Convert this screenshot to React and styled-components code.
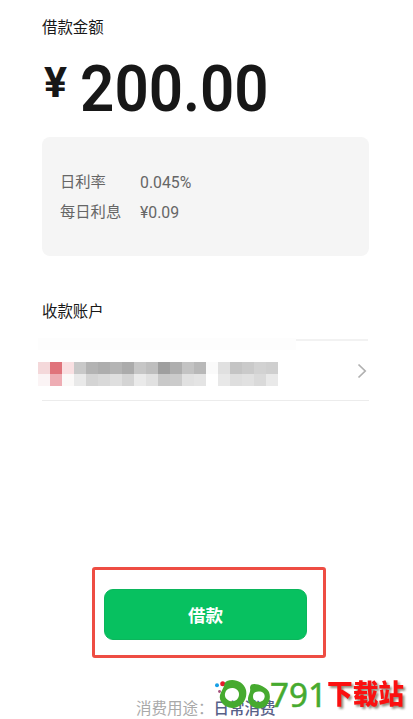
import React from 'react';
import styled, { createGlobalStyle } from 'styled-components';

const GlobalStyle = createGlobalStyle`
  * { box-sizing: border-box; }
  body { margin: 0; background: #fff; overflow: hidden; }
`;

const Page = styled.main`
  position: relative;
  display: flex;
  flex-direction: column;
  width: 413px;
  height: 719px;
  overflow: hidden;
  background: #fff;
  font-family: Roboto, 'Noto Sans CJK SC', sans-serif;

  > * { flex-shrink: 0; }
`;

const SectionTitle = styled.h2`
  margin: ${(p) => p.$top}px 0 0 42px;
  height: 24px;
  font-size: 15.4px;
  line-height: 25px;
  font-weight: 400;
  color: #181818;
`;

const Amount = styled.div`
  display: flex;
  margin: 14px 0 0 44px;
  height: 72px;
  color: #171717;
`;

const Currency = styled.span`
  width: 36px;
  font-size: 43px;
  line-height: 50px;
  font-weight: 700;
  margin-top: 3px;
`;

const Figure = styled.span`
  font-size: 64px;
  line-height: 72px;
  font-weight: 600;
  white-space: nowrap;
  transform: scaleX(0.938);
  transform-origin: 2px 50%;
`;

const RateCard = styled.dl`
  display: grid;
  grid-template-columns: 80px 1fr;
  grid-auto-rows: 30px;
  margin: 11px 0 0 42px;
  padding: 30px 18px;
  width: 327px;
  height: 119px;
  border-radius: 8px;
  background: #f5f5f5;
  font-size: 15.3px;
  color: #666;
`;

const Term = styled.dt`
  margin: 0;
  line-height: 31px;
`;

const Value = styled.dd`
  margin: 0;
  font-size: 15.8px;
  line-height: 31px;
`;

const AccountRow = styled.div`
  display: flex;
  align-items: center;
  justify-content: space-between;
  margin: 14px 0 0 38px;
  padding-right: 1px;
  width: 331px;
  height: 63px;
  background:
    linear-gradient(#f2f2f2, #f2f2f2) 258px 1px / 72px 2px no-repeat,
    linear-gradient(#fdfdfd, #fdfdfd) 0 0 / 258px 12px no-repeat,
    linear-gradient(#ececec, #ececec) 4px 62px / 327px 1px no-repeat;
`;

const Mosaic = styled.div`
  display: grid;
  grid-template-columns: repeat(20, 12px);
  grid-auto-rows: 12px;
  margin-top: 9px;
`;

const Cell = styled.span`
  background: ${(p) => p.$tone};
`;

const Chevron = styled.svg`
  margin-top: 3px;
  width: 11px;
  height: 16px;
`;

const Highlight = styled.div`
  display: flex;
  align-items: flex-start;
  margin: 166px 0 0 92px;
  padding: 19px 0 0 9px;
  width: 234px;
  height: 91px;
  border: 3px solid #ee4d43;
  border-radius: 3px;
`;

const BorrowButton = styled.button`
  width: 203px;
  height: 51px;
  padding: 0;
  border: 1px solid #0bb65c;
  border-radius: 9px;
  background: #07c160;
  color: #fff;
  font: 700 17.5px/49px 'Noto Sans CJK SC', sans-serif;
`;

const Purpose = styled.p`
  display: flex;
  margin: 39px 0 0 136px;
  font-size: 15.5px;
  line-height: 24px;
  color: #a9a9a9;
`;

const PurposeValue = styled.b`
  font-weight: 500;
  color: #576088;
`;

const Watermark = styled.svg`
  position: absolute;
  left: 205px;
  top: 670px;
  width: 208px;
  height: 49px;
`;

const SiteName = styled.text`
  font: 900 27px 'Noto Sans CJK SC', sans-serif;
  fill: #fb1010;
  filter: drop-shadow(2px 2.5px 1.2px rgba(100, 95, 75, 0.7));
`;

const TOP = ['#f4d8da', '#e0737b', '#f9e0e2', '#c8c8c8', '#b3b3b3', '#adadad', '#b4b4b4', '#ababab', '#c6c6c6', '#bebebe', '#9f9f9f', '#aeaeae', '#c3c3c3', '#b8b8b8', '#fafafa', '#e0e0e0', '#c4c4c4', '#cacaca', '#d2d2d2', '#cfcfcf'];
const BOTTOM = ['#fbf4f5', '#eeadb4', '#fbf9f8', '#e9e9e9', '#d4d4d4', '#d9d9d9', '#dfdfdf', '#d4d4d4', '#eaeaea', '#e1e1e1', '#c9c9c9', '#cbcbcb', '#e1e1e1', '#e4e4e4', '#ffffff', '#e8e8e8', '#dedede', '#e1e1e1', '#dadada', '#e9e9e9'];

function SiteLogo() {
  return (
    <Watermark viewBox="0 0 208 49">
      <circle cx="12" cy="15.3" r="2" fill="#169fe6" />
      <circle cx="17.7" cy="13.8" r="2.5" fill="#e51c2c" />
      <circle cx="14.5" cy="21.5" r="1.4" fill="#a5527c" />
      <g fill="#46aa2f" fillRule="evenodd">
        <path d="M22 11C28 8 39 11 41 20C43 30 36 38 27 38C19 37.500 13.500 31 15 25C16 21 19 18 19.500 14C20 12 21 11.500 22 11ZM28 18C22 17.500 19.500 22 20 26C21 31 28 33 32 29.500C36 25 34 18.500 28 18Z" />
        <path d="M46.500 14.500C50 12.500 61 16 64 22C67 30 62 38 55 38.500C48 39 42.500 34 43 28C43.500 24 46 22 45 18C45 16.500 45.500 15.500 46.500 14.500ZM54 21.500C49 21 47 25 48.500 29C50.500 33 57 33 59 29C61 25 58.500 21.500 54 21.500Z" />
      </g>
      <text x="65" y="36.500" fill="#46aa2f" stroke="#46aa2f" strokeWidth=".5" fontFamily="Noto Sans, sans-serif" fontSize="33" fontWeight="400" textLength="57" lengthAdjust="spacingAndGlyphs">791</text>
      <SiteName x="122" y="34" textLength="77" lengthAdjust="spacingAndGlyphs">下载站</SiteName>
    </Watermark>
  );
}

export default function App() {
  return (
    <>
      <GlobalStyle />
      <Page>
        <SectionTitle $top={16}>借款金额</SectionTitle>
        <Amount>
          <Currency>¥</Currency>
          <Figure>200.00</Figure>
        </Amount>
        <RateCard>
          <Term>日利率</Term>
          <Value>0.045%</Value>
          <Term>每日利息</Term>
          <Value>¥0.09</Value>
        </RateCard>
        <SectionTitle $top={44}>收款账户</SectionTitle>
        <AccountRow>
          <Mosaic>
            {[...TOP, ...BOTTOM].map((tone, i) => (
              <Cell key={i} $tone={tone} />
            ))}
          </Mosaic>
          <Chevron viewBox="0 0 11 16" fill="none" stroke="#b0b0b0" strokeWidth="1.7">
            <path d="M1.500 1.500L8.200 8L1.500 14.500" />
          </Chevron>
        </AccountRow>
        <Highlight>
          <BorrowButton>借款</BorrowButton>
        </Highlight>
        <Purpose>
          消费用途：
          <PurposeValue>日常消费</PurposeValue>
        </Purpose>
        <SiteLogo />
      </Page>
    </>
  );
}
